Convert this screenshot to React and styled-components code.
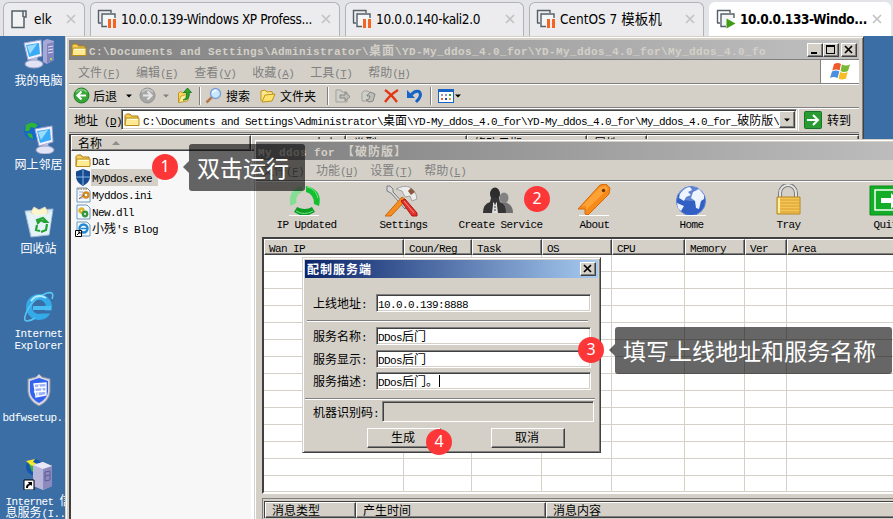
import React from "react";
import styled, { createGlobalStyle, css } from "styled-components";

const face = "#d4d0c8";

const GlobalStyle = createGlobalStyle`
  * { box-sizing: border-box; }
  body { margin: 0; overflow: hidden; background: #3a6ea5; }
`;

const Screen = styled.div`
  position: relative;
  display: flex;
  flex-direction: column;
  width: 893px;
  height: 519px;
  overflow: hidden;
  font-family: "Noto Sans CJK SC", sans-serif;
  font-size: 12px;
  line-height: 14px;
  color: #000;
`;

/* ---------- text ---------- */

const Latin = styled.span`
  font-family: "Liberation Mono", monospace;
  font-size: 11px;
  line-height: 0;
  letter-spacing: ${(p) => (p.$bold ? "0.4px" : "-0.6px")};
  white-space: pre;
`;

const Line = styled.span`
  white-space: pre;
  ${(p) => p.$bold && css`font-weight: 700; letter-spacing: 1px;`}
`;

// Half-width runs advance 6px per character, full-width ones 12px.
function Text({ children, bold }) {
  const runs = String(children).match(/[\x20-\x7e]+|[^\x20-\x7e]+/g) || [];
  return (
    <Line $bold={bold}>
      {runs.map((r, i) =>
        /^[\x20-\x7e]/.test(r) ? <Latin key={i} $bold={bold}>{r}</Latin> : r
      )}
    </Line>
  );
}

/* ---------- virtual machine tabs ---------- */

const TabBar = styled.div`
  display: flex;
  flex: none;
  gap: 5px;
  height: 36px;
  padding: 2px 2px 0 3px;
  background: #e3e4e8;
`;

const Tab = styled.div`
  display: flex;
  align-items: center;
  width: ${(p) => p.$w}px;
  height: 34px;
  padding: 0 8px 2px 6px;
  border: 1px solid ${(p) => (p.$active ? "#fff" : "#b3b3b3")};
  border-bottom: 0;
  border-radius: 6px 6px 0 0;
  background: ${(p) => (p.$active ? "#fff" : "#ececee")};
  svg { flex: none; }
`;

const TabLabel = styled.span`
  flex: 1;
  margin-left: ${(p) => p.$gap}px;
  font-family: "DejaVu Sans Condensed", "DejaVu Sans", "Noto Sans CJK SC", sans-serif;
  font-stretch: condensed;
  font-size: 13.5px;
  letter-spacing: ${(p) => p.$track || 0}px;
  font-weight: ${(p) => (p.$active ? 700 : 400)};
  line-height: 20px;
  white-space: nowrap;
`;

const Close = () => (
  <svg width="10" height="10" viewBox="0 0 10 10">
    <path d="M1 1l8 8M9 1l-8 8" stroke="#c3c3c3" strokeWidth="1.7" />
  </svg>
);

const VmIcon = ({ state }) =>
  state === "off" ? (
    <svg width="18" height="20" viewBox="0 0 18 20">
      <path d="M2 2h14v6h-2v10.500h-12zM13 2v6" fill="#f2f2f3" stroke="#56606a" strokeWidth="1.500" />
    </svg>
  ) : (
    <svg width="20" height="20" viewBox="0 0 20 20">
      <path d="M1.500 14V1.500H14V4M1 14h3" fill="none" stroke="#56606a" strokeWidth="1.400" />
      <path d="M10 17.500H5V5h13v4" fill="#f4f5f6" stroke="#56606a" strokeWidth="1.400" />
      {state === "paused" ? (
        <path d="M11 10h3v9h-3zM16 10h3v9h-3z" fill="#f26522" />
      ) : (
        <path d="M10.500 9.500l9 5-9 5z" fill="#3f9c14" />
      )}
    </svg>
  );

/* ---------- desktop ---------- */

const Desktop = styled.div`
  flex: 1;
  padding-top: 2px;
  background: #3a6ea5;
`;

const Shortcuts = styled.div`
  display: grid;
  grid-auto-rows: 84px;
  width: 77px;
`;

const Shortcut = styled.div`
  display: flex;
  flex-direction: column;
  align-items: center;
  color: #fff;
  line-height: 12px;
  text-align: center;
  svg { flex: none; margin-bottom: 4px; }
`;

const Monitor = ({ x = 0, y = 0 }) => (
  <g transform={`translate(${x} ${y})`}>
    <path d="M2 3l17-3 1 16-14 4z" fill="#f2f3ff" stroke="#9da4d2" />
    <path d="M4 5l13-2 1 11-11 3z" fill="#3aabf6" />
    <path d="M5 6l10-2-7 10z" fill="#9bdcfd" />
    <path d="M9 19l6-2 1 5-6 1z" fill="#bcbfdd" />
    <ellipse cx="12" cy="24" rx="9" ry="4" fill="#e2e3f4" stroke="#9da4cc" />
  </g>
);

const desktopArt = {
  computer: (
    <>
      <path d="M20 3l4-2 7 2v19l-7 4-4-2z" fill="#a7a8d6" />
      <path d="M24 6l7-2v18l-7 4z" fill="#8183bd" />
      <path d="M25 9l5-1M25 12l5-1M25 15l5-1" stroke="#dfe1ff" />
      <circle cx="28" cy="21" r="1" fill="#a8f354" />
      <Monitor x={-1} y={2} />
    </>
  ),
  network: (
    <>
      <circle cx="10" cy="9" r="9" fill="#1768c8" />
      <path d="M3 3q6-5 12 0l-3 3-4-1-2 4-4 0zM4 11l5 1 1 5-4-2z" fill="#30b436" />
      <Monitor x={10} y={4} />
    </>
  ),
  recycle: (
    <>
      <path d="M2 5l28-2-4 26-18 2z" fill="#d7e9f2" stroke="#9ebdd2" />
      <path d="M8 6l3-5 5 3 6-3 3 5-3 4-10 1z" fill="#fff5ca" stroke="#d5d3bb" />
      <path d="M3 6q13 5 26 0l-3 22-17 2z" fill="#e9f5fa" opacity=".8" />
      <path d="M14 14l6-2 4 4-3 0-3-2-3 3zM14 19l-1 5 4 1M24 18l-1 6-5 2" fill="none" stroke="#24a233" strokeWidth="2.200" />
    </>
  ),
  explorer: (
    <>
      <circle cx="16" cy="17" r="10" fill="none" stroke="#34aae9" strokeWidth="6" />
      <path d="M10 16h18v4H10z" fill="#49bdf4" />
      <path d="M19 20.500h11v3H19z" fill="#3a6ea5" />
      <path d="M10 15q2-5 6-5t6 5z" fill="#3a6ea5" />
      <path d="M29 9Q32 1 24 3 12 7 5 19-1 31 4 31q4 0 8-3" fill="none" stroke="#56c5f4" strokeWidth="1.600" />
      <path d="M8 11q6-8 15-3" stroke="#b4ecff" strokeWidth="2" fill="none" />
    </>
  ),
  shield: (
    <>
      <path d="M16 0l3 3 8 2v13q-1 9-11 14Q6 27 5 18V5l8-2z" fill="#d6d7e1" stroke="#8f92a8" />
      <path d="M16 4l9 3v11q-1 7-9 11-8-4-9-11V7z" fill="#3463ee" />
      <path d="M11 10l12-1v12l-10 2zM11 14l12-1M11 18l12-1M16 10v4M19 13v4M15 18v4" fill="#9db4fb" stroke="#fff" strokeWidth="1.300" />
    </>
  ),
  server: (
    <>
      <circle cx="11" cy="9" r="8" fill="#1556b2" />
      <path d="M5 4l6 1 2 6-4 3-2-5z" fill="#3baf35" />
      <path d="M3 3l9-2-2 3 4 2-5 2z" fill="#f6e929" />
      <path d="M10 7l10-3 9 4v20l-9 4-10-4z" fill="#b7b6da" />
      <path d="M20 10l9-3v21l-9 4z" fill="#8c8abd" />
      <path d="M10 7l10-3 9 4-9 3z" fill="#e7e7f8" />
      <path d="M22 14l5-1v9l-5 1zM22 18l5-1" fill="none" stroke="#5f5c98" />
      <path d="M1 22h10v10H1z" fill="#fff" stroke="#000" />
      <path d="M3 30q0-4 3-4l-1-2h4v4l-1-1q-3 0-3 3z" fill="#000" />
    </>
  ),
};

const DesktopIcon = ({ name }) => (
  <svg width="32" height="32" viewBox="0 0 32 32">{desktopArt[name]}</svg>
);

/* ---------- window chrome ---------- */

const Window = styled.section`
  position: absolute;
  left: ${(p) => p.$x}px;
  top: ${(p) => p.$y}px;
  width: ${(p) => p.$w}px;
  height: ${(p) => p.$h}px;
  display: flex;
  flex-direction: column;
  padding: ${(p) => p.$pad};
  background: ${face};
  border: 1px solid;
  border-color: ${face} #404040 #404040 ${face};
  box-shadow: inset 1px 1px #fff, inset -1px -1px #808080;
`;

const TitleBar = styled.header`
  display: flex;
  flex: none;
  align-items: center;
  height: ${(p) => p.$h || 18}px;
  padding: 0 2px;
  color: ${(p) => (p.$active ? "#fff" : face)};
  background: ${(p) =>
    p.$active
      ? "linear-gradient(90deg, #0a246a, #a6caf0)"
      : "linear-gradient(90deg, #808080, #c0c0c0)"};
  svg { flex: none; }
`;

const TitleText = styled.div`
  flex: 1;
  min-width: 0;
  padding-left: ${(p) => p.$inset || 0}px;
`;

const CaptionButtons = styled.div`
  display: flex;
  flex: none;
`;

const raised = css`
  border: 1px solid;
  border-color: #fff #404040 #404040 #fff;
  box-shadow: inset -1px -1px #808080;
  background: ${face};
`;

const CaptionButton = styled.div`
  ${raised}
  width: 16px;
  height: 14px;
  margin-left: ${(p) => p.$gap || 0}px;
  svg { display: block; }
`;

const CaptionGlyph = ({ kind }) => (
  <svg width="14" height="12" viewBox="0 0 14 12" shapeRendering={kind === "close" ? "auto" : "crispEdges"}>
    {kind === "min" && <path d="M3 8h6v2H3z" />}
    {kind === "max" && <path d="M2 1h9v9H2zM3 3v6h7V3z" fillRule="evenodd" />}
    {kind === "close" && <path d="M3 2l7 7M10 2L3 9" stroke="#000" strokeWidth="1.700" />}
  </svg>
);

const MenuBar = styled.nav`
  display: flex;
  flex: none;
  align-items: center;
  gap: ${(p) => p.$gap}px;
  height: ${(p) => p.$h}px;
  padding-left: ${(p) => p.$pl}px;
  border-top: ${(p) => (p.$top ? "1px solid #808080" : "0")};
  border-bottom: 1px solid #808080;
  box-shadow: 0 1px #fff;
  color: #808080;
`;

const MenuItem = styled.span`
  white-space: nowrap;
  u { text-underline-offset: 1px; }
`;

const Flag = styled.div`
  display: flex;
  align-items: center;
  justify-content: center;
  width: 39px;
  height: 23px;
  margin-left: auto;
  background: #fff;
  border-left: 1px solid #808080;
`;

function Menu({ items }) {
  return items.map(([label, key]) => (
    <MenuItem key={label}>
      {label}<Latin>(<u>{key}</u>)</Latin>
    </MenuItem>
  ));
}

/* ---------- explorer ---------- */

const Tools = styled.div`
  display: flex;
  flex: none;
  align-items: center;
  height: 24px;
  padding-left: 4px;
  border-bottom: 1px solid #808080;
  box-shadow: 0 1px #fff;
  svg { flex: none; }
`;

const Tool = styled.div`
  display: flex;
  align-items: center;
  gap: ${(p) => p.$gap ?? 4}px;
  width: ${(p) => p.$w}px;
  white-space: nowrap;
`;

const Divider = styled.i`
  flex: none;
  width: 2px;
  height: 18px;
  margin-right: ${(p) => p.$mr}px;
  border-left: 1px solid #808080;
  border-right: 1px solid #fff;
`;

const Arrow = ({ color = "#000" }) => (
  <svg width="6" height="4" viewBox="0 0 6 4"><path d="M0 .500h6L3 3.500z" fill={color} /></svg>
);

const NavCircle = ({ back }) => (
  <svg width="17" height="17" viewBox="0 0 17 17">
    <circle cx="8.500" cy="8.500" r="7.500" fill={back ? "#35a735" : "#a6a6a6"} stroke={back ? "#1f7a24" : "#929292"} />
    <path d="M3 5q5-5 11 0" stroke="#fff" opacity=".35" fill="none" strokeWidth="2" />
    <path
      d={back ? "M13 8.500H5M8.500 4.500l-4 4 4 4" : "M4 8.500h8M8.500 4.500l4 4-4 4"}
      fill="none" stroke={back ? "#fff" : "#e5e5e5"} strokeWidth="2.200"
    />
  </svg>
);

const Folder = () => (
  <svg width="16" height="16" viewBox="0 0 16 16">
    <path d="M1 13V3.500L2.500 2H6l1.500 2H14v9z" fill="#f5cf57" stroke="#a87a14" />
    <path d="M1 13.500L2 6h13v7.500z" fill="#fdea93" stroke="#b98c1c" />
    <path d="M3 7.500h10.500" stroke="#fffbd8" />
  </svg>
);

const FolderUp = () => (
  <svg width="16" height="17" viewBox="0 0 16 17">
    <path d="M1.500 15.500V6l2-1.500L6 6l5-1.500v9z" fill="#f8d763" stroke="#c09523" />
    <path d="M1.500 15.500L4 9l8-2-1.500 7z" fill="#ffee9c" stroke="#c09523" strokeWidth=".8" />
    <path d="M6 13q4-1 3.500-7.500H6.500L10.500 1l4 4.500h-2.300q.8 8-6.200 7.500z" fill="#2aa52a" stroke="#14711a" strokeWidth=".8" />
  </svg>
);

const OpenFolder = () => (
  <svg width="16" height="16" viewBox="0 0 16 16">
    <path d="M1 13V3l4-1 2 2 5-.500 1 3" fill="#fce889" stroke="#c09219" />
    <path d="M2 14l3-7 10-1-3 7z" fill="#ffe36f" stroke="#c09219" />
  </svg>
);

const Magnifier = () => (
  <svg width="17" height="17" viewBox="0 0 17 17">
    <path d="M7 10l-5.500 5.500" stroke="#b67848" strokeWidth="2.500" />
    <circle cx="10.500" cy="6.500" r="5" fill="#c6e7fd" stroke="#7ba0d6" strokeWidth="1.400" />
    <path d="M7.500 6q1-3 4-2.500" stroke="#fff" strokeWidth="1.500" fill="none" />
  </svg>
);

const MoveTo = ({ copy }) => (
  <svg width="17" height="16" viewBox="0 0 17 16">
    <path d={copy ? "M2 5l2-2h4l2 2v8H2zM6 7h4" : "M1 14V2h5l1 2h5v10z"} fill="#d0d0cb" stroke="#a1a19b" />
    <path d={copy ? "M6 12q4 0 4-4H7l3-4 5 2-2 7-4 1z" : "M5 7h5V4l5 4.500-5 4.500v-3H5z"} fill="#bebebb" stroke="#868681" />
  </svg>
);

const DeleteIcon = () => (
  <svg width="17" height="16" viewBox="0 0 17 16">
    <path d="M2 2q6 4 12 12M15 2Q7 7 2 14" fill="none" stroke="#e23612" strokeWidth="2.300" />
  </svg>
);

const UndoIcon = () => (
  <svg width="17" height="16" viewBox="0 0 17 16">
    <path d="M5 7q4-5 8-3.500 4 4-3 10.500" fill="none" stroke="#1664c5" strokeWidth="3" />
    <path d="M1 2v8h8z" fill="#1664c5" />
  </svg>
);

const ViewsIcon = () => (
  <svg width="16" height="14" viewBox="0 0 16 14" shapeRendering="crispEdges">
    <path d="M0 0h16v14H0z" fill="#1863c4" />
    <path d="M1 3h14v10H1z" fill="#fff" />
    <path d="M3 5h2v2H3zM7 5h2v2H7z" fill="#8e99bd" />
    <path d="M11 5h2v2h-2z" fill="#32a52e" />
    <path d="M3 9h2v2H3z" fill="#e86134" />
    <path d="M7 9h2v2H7z" fill="#244eb0" />
    <path d="M11 9h2v2h-2z" fill="#d6a82b" />
  </svg>
);

const FlagIcon = () => (
  <svg width="20" height="19" viewBox="0 0 20 19">
    <path d="M4 2q4-2 7 0L9.500 8.500Q6 6.500 2.300 8.500z" fill="#ee5b2c" />
    <path d="M12 2.500q4 2 8 0L18 9q-4 2-7.500 0z" fill="#79b834" />
    <path d="M2 9.500q4-2 7.300 0L7.500 16q-4-2-7.500 0z" fill="#4a8ee0" />
    <path d="M10.200 10q4 2 7.500 0L16 16.500q-4 2-7.500 0z" fill="#f7bd26" />
  </svg>
);

const AddressRow = styled.div`
  display: flex;
  flex: none;
  align-items: center;
  height: 25px;
  padding: 1px 0 2px 5px;
  border-bottom: 1px solid #808080;
`;

const AddressLabel = styled.div`width: 47px; white-space: nowrap;`;

const sunken = css`
  border: 1px solid;
  border-color: #808080 #fff #fff #808080;
  box-shadow: inset 1px 1px #404040, inset -1px -1px ${face};
`;

const AddressBox = styled.div`
  ${sunken}
  display: flex;
  align-items: center;
  width: 676px;
  height: 21px;
  padding: 2px 1px 2px 2px;
  background: #fff;
  svg { flex: none; }
`;

const AddressPath = styled.div`flex: 1; padding-left: 3px;`;

const DropButton = styled.div`
  ${raised}
  display: flex;
  align-items: center;
  justify-content: center;
  width: 16px;
  height: 17px;
`;

const Go = styled.div`
  display: flex;
  align-items: center;
  gap: 5px;
  height: 22px;
  margin-left: 1px;
  padding-left: 5px;
  border-left: 1px solid #fff;
`;

const GoIcon = () => (
  <svg width="18" height="18" viewBox="0 0 18 18">
    <rect x=".5" y=".5" width="17" height="17" rx="1" fill="#299b32" stroke="#177422" />
    <path d="M3 9h11M9 4l5 5-5 5" stroke="#fff" strokeWidth="2" fill="none" />
  </svg>
);

const FileView = styled.div`
  flex: 1;
  margin-top: 1px;
  border-top: 1px solid #404040;
  border-left: 2px solid #404040;
  background: #fff;
  overflow: hidden;
`;

const Columns = styled.div`
  display: flex;
  height: 16px;
  background: ${face};
`;

const Column = styled.div`
  display: flex;
  flex: ${(p) => (p.$w ? "none" : "1")};
  align-items: center;
  justify-content: ${(p) => (p.$end ? "flex-end" : "flex-start")};
  gap: 10px;
  width: ${(p) => (p.$w ? p.$w + "px" : "auto")};
  height: 100%;
  padding: 0 ${(p) => (p.$end ? 8 : 0)}px 0 ${(p) => p.$pl ?? 6}px;
  border: 1px solid;
  border-color: #fff #404040 #404040 #fff;
  box-shadow: inset -1px -1px #808080;
  white-space: nowrap;
`;

const Files = styled.div`
  width: 180px;
  height: 380px;
  padding: 1px 0 0 4px;
  background: #f7f7f7;
`;

const FileRow = styled.div`
  display: flex;
  align-items: center;
  height: 17px;
  svg { flex: none; }
`;

const FileName = styled.span`
  height: 17px;
  padding: 1px 6px 0 1px;
  background: ${(p) => (p.$selected ? face : "transparent")};
`;

const FileIcon = ({ kind }) => {
  if (kind === "folder") return <Folder />;
  if (kind === "exe")
    return (
      <svg width="16" height="17" viewBox="0 0 16 17">
        <path d="M8 0l7 2.500V8q0 5-7 9Q1 13 1 8V2.500z" fill="#174a91" />
        <path d="M8 1v15M1 8h14" stroke="#86b9e7" />
      </svg>
    );
  return (
    <svg width="16" height="16" viewBox="0 0 16 16">
      <path d="M2 1h10l3 3v11H2z" fill="#f3faff" stroke="#6f96ba" />
      {kind === "ini" && (
        <>
          <path d="M3 2h9" stroke="#ad8657" strokeWidth="1.500" strokeDasharray="1.500 1" />
          <path d="M4 5h4M4 8h3M4 11h4" stroke="#97aed2" />
          <circle cx="11" cy="8" r="2.500" fill="none" stroke="#d48b20" strokeWidth="2.400" />
          <path d="M4 12l5-4" stroke="#9b561c" />
        </>
      )}
      {kind === "dll" && (
        <>
          <circle cx="6.500" cy="6.500" r="2" fill="none" stroke="#dfb42a" strokeWidth="2.400" />
          <circle cx="10" cy="10" r="2.200" fill="none" stroke="#36963e" strokeWidth="2.400" />
        </>
      )}
      {kind === "url" && (
        <>
          <circle cx="8.500" cy="7.500" r="4" fill="none" stroke="#2388d2" strokeWidth="2.400" />
          <path d="M6 7.500h6" stroke="#2388d2" strokeWidth="1.500" />
          <path d="M.5 9.500h6v6h-6z" fill="#fff" stroke="#000" />
          <path d="M2 14l3-3M3 11h2v2" stroke="#000" fill="none" />
        </>
      )}
    </svg>
  );
};

/* ---------- application window ---------- */

const BigTools = styled.div`
  display: flex;
  flex: none;
  height: 56px;
  padding: 3px 0 0 2px;
`;

const BigTool = styled.div`
  display: flex;
  flex: none;
  flex-direction: column;
  align-items: center;
  width: 97px;
  margin-left: ${(p) => p.$shift || 0}px;
  line-height: 12px;
  svg { flex: none; margin-right: ${(p) => p.$nudge || 0}px; }
`;

const toolArt = {
  update: (
    <>
      <path d="M2.500 22L8.500 19Q7 11 14 8V2Q-1 6 2.500 22z" fill="#86dd94" />
      <path d="M18 2V8Q26 10 26 20L31 22Q35 6 18 2z" fill="#14c02f" />
      <path d="M9 23l-3 5q10 7 21 0l-3-5q-7 4-15 0z" fill="#0f9c24" />
      <path d="M19 3q9 2 11 11M8 27q8 5 17 0" fill="none" stroke="#6ee882" />
    </>
  ),
  settings: (
    <>
      <path d="M2 2l3 0 3 3v3l14 15-2 2L6 9 2 7z" fill="#d8dada" stroke="#7a7c7c" />
      <path d="M11 5q8-4 13-2 7 3 8 12l-5 2-2-5-5 1-3-6z" fill="#eceeee" stroke="#a2a2a2" />
      <path d="M26 4l4 4-4 3-3-4z" fill="#8b593b" />
      <path d="M17 13l4 3L6 32H0z" fill="#f68d1f" stroke="#c66712" />
      <path d="M16 17l4-2 12 14v3h-5z" fill="#e3312a" stroke="#a91818" />
      <path d="M19 17l10 12" stroke="#ff938a" />
    </>
  ),
  people: (
    <>
      <ellipse cx="22" cy="14" rx="4.500" ry="5.500" fill="#828282" />
      <path d="M17 19h8q6 2 6 10H17z" fill="#707070" />
      <ellipse cx="13" cy="10" rx="5" ry="6.500" fill="#2d2d2d" />
      <path d="M9 14h8l1 4q6 2 6 11H1q0-9 7-11z" fill="#343434" />
      <path d="M11 18l2 2 2-2 0 3 1 8h-6l1-8z" fill="#e0e0e0" />
      <path d="M13 19v9" stroke="#444" strokeDasharray="2 1" />
    </>
  ),
  about: (
    <>
      <path d="M22 1l6-1 4 4-1 6L10 31l-3-1v-5H0z" fill="#f78a18" stroke="#d66a0a" />
      <path d="M22 3l6-1 2 3L8 26v-4H4z" fill="#ffae43" opacity=".7" />
      <circle cx="25.500" cy="6.500" r="1.700" fill="#713400" />
    </>
  ),
  home: (
    <>
      <circle cx="16" cy="17" r="14.500" fill="#315fc4" stroke="#5a81d6" />
      <path d="M5 10q5-7 10-7l2 3-4 2 3 3-5 2-2 4-5-3zM18 8l6-3 5 6 0 4-3 2-2 8-3-1-1-7-4-3zM2 19l7 3-3 5-3-3z" fill="#eaf2ff" />
      <ellipse cx="16" cy="10" rx="12" ry="7" fill="#fff" opacity=".22" />
    </>
  ),
  lock: (
    <>
      <path d="M8 14V9a8 8 0 0 1 16 0v5" fill="none" stroke="#7b7b7b" strokeWidth="4" />
      <path d="M8 14V9a8 8 0 0 1 16 0v5" fill="none" stroke="#e5e5e5" strokeWidth="2" />
      <path d="M5 13h23v17H5z" fill="#f3c552" stroke="#b88420" />
      <path d="M6 16h21M6 19h21M6 22h21M6 25h21M6 28h21" stroke="#d89e32" />
      <path d="M7 14v15" stroke="#fff0a0" strokeWidth="2" />
    </>
  ),
  quit: (
    <>
      <path d="M1 2h31v29H1z" fill="#13ad28" stroke="#0d8a1d" />
      <path d="M27 6H6v20h21" fill="none" stroke="#f5fff5" strokeWidth="1.500" />
      <path d="M12 14h10v-5l8 8-8 8v-6H12z" fill="#fff" />
    </>
  ),
};

const ToolIcon = ({ name }) => (
  <svg width="33" height="33" viewBox="0 0 33 33">
    {toolArt[name]}
    {["update", "about", "home"].includes(name) && <path d="M1 31.500h30" stroke="#fff" />}
  </svg>
);

const HostList = styled.div`
  display: flex;
  flex: none;
  flex-direction: column;
  height: 257px;
  margin-left: 6px;
  border: solid #404040;
  border-width: 2px 0 0 2px;
  border-bottom: 2px solid #fff;
  background: #fff;
`;

const Grid = styled.div`
  display: flex;
  flex: 1;
  border-bottom: 1px solid ${face};
  background: repeating-linear-gradient(180deg, #fff 0 16px, ${face} 16px 17px);
`;

const GridColumn = styled.div`
  width: ${(p) => p.$w}px;
  border-right: 1px solid ${face};
`;

const MessageFrame = styled.div`
  flex: none;
  height: 24px;
  margin: 4px 0 0 6px;
  padding: 2px 0 0 1px;
  border-top: 1px solid #808080;
  border-left: 1px solid #808080;
`;

const MessageList = styled.div`
  border: solid #404040;
  border-width: 1px 0 0 1px;
`;

/* ---------- dialog ---------- */

const Form = styled.div`
  display: flex;
  flex-direction: column;
  padding: ${(p) => p.$pad};
`;

const Field = styled.label`
  display: flex;
  align-items: center;
  height: ${(p) => p.$h || 19}px;
  margin-bottom: ${(p) => p.$mb || 0}px;
  padding-left: 8px;
`;

const FieldLabel = styled.span`
  flex: none;
  width: ${(p) => p.$w || 63}px;
`;

const FieldBox = styled.span`
  ${sunken}
  display: flex;
  align-items: center;
  width: ${(p) => p.$w || 215}px;
  height: 100%;
  padding-left: 1px;
  background: ${(p) => (p.$disabled ? face : "#fff")};
`;

const Caret = styled.i`
  width: 1px;
  height: 12px;
  margin-left: 1px;
  background: #000;
`;

const Rule = styled.hr`
  width: ${(p) => p.$w}px;
  height: 2px;
  margin: 0 0 ${(p) => p.$mb}px ${(p) => p.$ml}px;
  border: 0;
  border-top: 1px solid #808080;
  border-bottom: 1px solid #fff;
`;

const Actions = styled.div`
  display: flex;
  gap: 50px;
  padding-left: 62px;
`;

const Button = styled.div`
  ${raised}
  display: flex;
  align-items: center;
  justify-content: center;
  width: 74px;
  height: 20px;
  padding: 0 2px 2px 0;
`;

/* ---------- annotations ---------- */

const Badge = styled.div`
  position: absolute;
  left: ${(p) => p.$x - 13}px;
  top: ${(p) => p.$y - 13}px;
  display: flex;
  align-items: center;
  justify-content: center;
  width: 26px;
  height: 26px;
  padding-bottom: 2px;
  border-radius: 50%;
  background: #fd3737;
  color: #fff;
  font: 16px "Noto Sans", sans-serif;
`;

const Callout = styled.div`
  position: absolute;
  left: ${(p) => p.$x}px;
  top: ${(p) => p.$y}px;
  width: ${(p) => p.$w}px;
  height: 47px;
  padding-left: 8px;
  border-radius: 3px;
  background: rgba(0, 0, 0, 0.6);
  color: #fff;
  font-size: 23px;
  line-height: 47px;
  white-space: nowrap;
  &::before {
    content: "";
    position: absolute;
    left: -6px;
    top: 17px;
    border: solid transparent;
    border-width: 6px 6px 6px 0;
    border-right-color: rgba(0, 0, 0, 0.6);
  }
`;

const tabs = [
  { w: 82, label: "elk", state: "off", gap: 6 },
  { w: 250, label: "10.0.0.139-Windows XP Profess...", state: "paused", gap: 4, track: -0.35 },
  { w: 179, label: "10.0.0.140-kali2.0", state: "paused", gap: 4, track: -0.35 },
  { w: 175, label: "CentOS 7 模板机", state: "paused", gap: 4, track: 0 },
  { w: 182, label: "10.0.0.133-Windo...", state: "running", gap: 4, track: -0.4, active: true },
];

const shortcuts = [
  ["computer", ["我的电脑"]],
  ["network", ["网上邻居"]],
  ["recycle", ["回收站"]],
  ["explorer", ["Internet", "Explorer"]],
  ["shield", ["bdfwsetup..."]],
  ["server", ["Internet 信", "息服务(I..."]],
];

const files = [
  ["folder", "Dat"],
  ["exe", "MyDdos.exe", true],
  ["ini", "Myddos.ini"],
  ["dll", "New.dll"],
  ["url", "小残's Blog"],
];

const hostColumns = [
  ["Wan IP", 140], ["Coun/Reg", 68], ["Task", 70], ["OS", 70],
  ["CPU", 73], ["Memory", 60], ["Ver", 42], ["Area", 0],
];

const bigTools = [
  { icon: "update", label: "IP Updated", nudge: 5 },
  { icon: "settings", label: "Settings", nudge: 5 },
  { icon: "people", label: "Create Service", nudge: 5 },
  { icon: "about", label: "About", shift: -3 },
  { icon: "home", label: "Home" },
  { icon: "lock", label: "Tray" },
  { icon: "quit", label: "Quit" },
];

const base = "桌面\\YD-My_ddos_4.0_for\\YD-My_ddos_4.0_for\\";
const root = "C:\\Documents and Settings\\Administrator\\";

function Explorer() {
  return (
    <Window $x={65} $y={36} $w={799} $h={520} $pad="3px 4px 0 3px">
      <TitleBar $h={19}>
        <Folder />
        <TitleText $inset={2}><Text bold>{root + base + "My_ddos_4.0_fo"}</Text></TitleText>
        <CaptionButtons>
          {["min", "max", "close"].map((k) => (
            <CaptionButton key={k} $gap={k === "close" ? 2 : 0}><CaptionGlyph kind={k} /></CaptionButton>
          ))}
        </CaptionButtons>
      </TitleBar>
      <MenuBar $gap={16} $h={25} $pl={9} $top>
        <Menu items={[["文件", "F"], ["编辑", "E"], ["查看", "V"], ["收藏", "A"], ["工具", "T"], ["帮助", "H"]]} />
        <Flag><FlagIcon /></Flag>
      </MenuBar>
      <Tools>
        <Tool $w={53} $gap={3}><NavCircle back /><span>后退</span></Tool>
        <Tool $w={13}><Arrow /></Tool>
        <Tool $w={24}><NavCircle /></Tool>
        <Tool $w={14}><Arrow color="#808080" /></Tool>
        <Tool $w={22}><FolderUp /></Tool>
        <Divider $mr={4} />
        <Tool $w={55}><Magnifier /><span>搜索</span></Tool>
        <Tool $w={67}><OpenFolder /><span>文件夹</span></Tool>
        <Divider $mr={6} />
        <Tool $w={25}><MoveTo /></Tool>
        <Tool $w={23}><MoveTo copy /></Tool>
        <Tool $w={23}><DeleteIcon /></Tool>
        <Tool $w={24}><UndoIcon /></Tool>
        <Divider $mr={6} />
        <Tool $w={40} $gap={1}><ViewsIcon /><Arrow /></Tool>
      </Tools>
      <AddressRow>
        <AddressLabel>地址<Latin> (<u>D</u>)</Latin></AddressLabel>
        <AddressBox>
          <Folder />
          <AddressPath><Text>{root + base + "My_ddos_4.0_for_破防版\\"}</Text></AddressPath>
          <DropButton><Arrow /></DropButton>
        </AddressBox>
        <Go><GoIcon />转到</Go>
      </AddressRow>
      <FileView>
        <Columns>
          <Column $w={180}>
            名称
            <svg width="8" height="4" viewBox="0 0 8 4"><path d="M0 4l4-4 4 4z" fill="#8c8c8c" /></svg>
          </Column>
          <Column $w={95} $end>大小</Column>
          <Column $w={121}>类型</Column>
          <Column $w={120}>修改日期</Column>
          <Column $w={60}>属性</Column>
          <Column />
        </Columns>
        <Files>
          {files.map(([kind, name, selected]) => (
            <FileRow key={name}>
              <FileIcon kind={kind} />
              <FileName $selected={selected}><Text>{name}</Text></FileName>
            </FileRow>
          ))}
        </Files>
      </FileView>
    </Window>
  );
}

function Controller() {
  return (
    <Window $x={254} $y={139} $w={680} $h={420} $pad="2px 0 0 1px">
      <TitleBar $h={18}>
        <TitleText><Text bold>{"My ddos for 【破防版】"}</Text></TitleText>
      </TitleBar>
      <MenuBar $gap={12} $h={21} $pl={6}>
        <Menu items={[["文件", "F"], ["功能", "U"], ["设置", "T"], ["帮助", "L"]]} />
      </MenuBar>
      <BigTools>
        {bigTools.map(({ icon, label, nudge, shift }) => (
          <BigTool key={label} $nudge={nudge} $shift={shift}>
            <ToolIcon name={icon} />
            <Text>{label}</Text>
          </BigTool>
        ))}
      </BigTools>
      <HostList>
        <Columns>
          {hostColumns.map(([label, w]) => (
            <Column key={label} $w={w} $pl={4}><Text>{label}</Text></Column>
          ))}
        </Columns>
        <Grid>
          {hostColumns.slice(0, -1).map(([label, w]) => <GridColumn key={label} $w={w} />)}
        </Grid>
      </HostList>
      <MessageFrame>
        <MessageList>
          <Columns>
            <Column $w={91}>消息类型</Column>
            <Column $w={190}>产生时间</Column>
            <Column>消息内容</Column>
          </Columns>
        </MessageList>
      </MessageFrame>
    </Window>
  );
}

function ServiceDialog() {
  return (
    <Window $x={302} $y={257} $w={299} $h={196} $pad="2px">
      <TitleBar $active $h={18}>
        <TitleText><Text bold>配制服务端</Text></TitleText>
        <CaptionButtons><CaptionButton><CaptionGlyph kind="close" /></CaptionButton></CaptionButtons>
      </TitleBar>
      <Form $pad="16px 0 0 0">
        <Field $h={18} $mb={8}>
          <FieldLabel><Text>上线地址:</Text></FieldLabel>
          <FieldBox><Text>10.0.0.139:8888</Text></FieldBox>
        </Field>
        <Rule $w={281} $ml={2} $mb={5} />
        <Field $h={18} $mb={5}>
          <FieldLabel><Text>服务名称:</Text></FieldLabel>
          <FieldBox><Text>DDos后门</Text></FieldBox>
        </Field>
        <Field $h={18} $mb={4}>
          <FieldLabel><Text>服务显示:</Text></FieldLabel>
          <FieldBox><Text>DDos后门</Text></FieldBox>
        </Field>
        <Field $h={18} $mb={8}>
          <FieldLabel><Text>服务描述:</Text></FieldLabel>
          <FieldBox><Text>DDos后门。</Text><Caret /></FieldBox>
        </Field>
        <Rule $w={290} $ml={0} $mb={1} />
        <Field $h={21} $mb={6}>
          <FieldLabel $w={69}><Text>机器识别码:</Text></FieldLabel>
          <FieldBox $disabled $w={212} />
        </Field>
        <Actions><Button>生成</Button><Button>取消</Button></Actions>
      </Form>
    </Window>
  );
}

export default function App() {
  return (
    <Screen>
      <GlobalStyle />
      <TabBar>
        {tabs.map((t) => (
          <Tab key={t.label} $w={t.w} $active={t.active}>
            <VmIcon state={t.state} />
            <TabLabel $gap={t.gap} $track={t.track} $active={t.active}>{t.label}</TabLabel>
            <Close />
          </Tab>
        ))}
      </TabBar>
      <Desktop>
        <Shortcuts>
          {shortcuts.map(([icon, lines]) => (
            <Shortcut key={icon}>
              <DesktopIcon name={icon} />
              {lines.map((l) => <Text key={l}>{l}</Text>)}
            </Shortcut>
          ))}
        </Shortcuts>
      </Desktop>
      <Explorer />
      <Controller />
      <ServiceDialog />
      <Badge $x={165} $y={167}>1</Badge>
      <Badge $x={537} $y={199}>2</Badge>
      <Badge $x={591} $y={350}>3</Badge>
      <Badge $x={439} $y={442}>4</Badge>
      <Callout $x={189} $y={144} $w={116}>双击运行</Callout>
      <Callout $x={615} $y={327} $w={277}>填写上线地址和服务名称</Callout>
    </Screen>
  );
}
